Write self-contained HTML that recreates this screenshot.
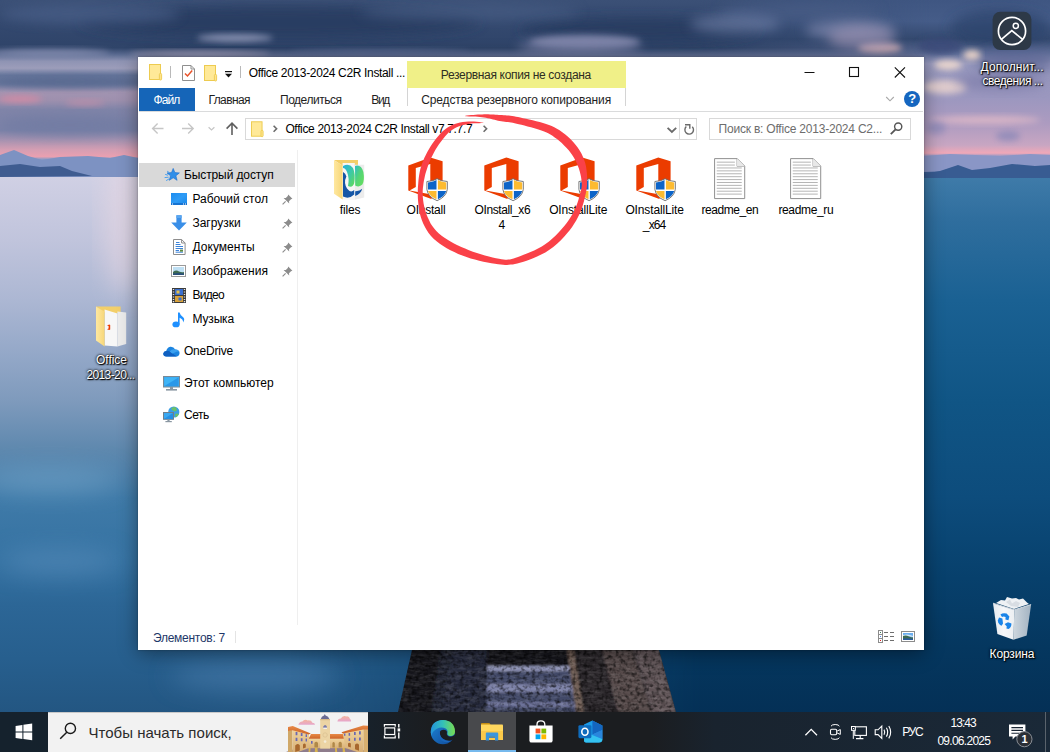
<!DOCTYPE html>
<html lang="ru"><head><meta charset="utf-8"><title>Desktop</title>
<style>
*{box-sizing:border-box;margin:0;padding:0}
html,body{width:1050px;height:752px;overflow:hidden;background:#1d4a70}
body{font-family:"Liberation Sans",sans-serif;font-size:12px;color:#000;position:relative}
.a{position:absolute}
#bg{position:absolute;left:0;top:0;width:1050px;height:752px;overflow:hidden}
#win{position:absolute;left:138px;top:57px;width:786px;height:593px;background:#fff;box-shadow:0 3px 18px rgba(0,0,0,.42),0 0 2px rgba(0,0,0,.3)}
.t{position:absolute;white-space:nowrap;line-height:16px;height:16px}
.dl{color:#fff;text-shadow:1px 1px 1px #000,0 0 3px rgba(0,0,0,.9),0 0 2px rgba(0,0,0,.8)}
#taskbar{position:absolute;left:0;top:712px;width:1050px;height:40px;background:#1a242e}
svg{position:absolute;overflow:visible}
</style></head><body>
<div id="bg">
<svg width="1050" height="752" viewBox="0 0 1050 752" style="position:absolute;left:0;top:0">
<defs>
<linearGradient id="wl" x1="0" y1="177" x2="0" y2="712" gradientUnits="userSpaceOnUse">
<stop offset="0" stop-color="#d0d0e4"/><stop offset=".12" stop-color="#c0c4dc"/><stop offset=".23" stop-color="#acb7d3"/>
<stop offset=".33" stop-color="#94a8c8"/><stop offset=".42" stop-color="#7e9abc"/><stop offset=".51" stop-color="#5e88ae"/>
<stop offset=".6" stop-color="#3f7aa8"/><stop offset=".72" stop-color="#3572a2"/><stop offset=".8" stop-color="#2c6696"/>
<stop offset=".9" stop-color="#275f8e"/><stop offset="1" stop-color="#235682"/>
</linearGradient>
<linearGradient id="wr" x1="0" y1="177" x2="0" y2="712" gradientUnits="userSpaceOnUse">
<stop offset="0" stop-color="#3f7ba9"/><stop offset=".08" stop-color="#2f6e9e"/><stop offset=".23" stop-color="#1a6193"/>
<stop offset=".42" stop-color="#105585"/><stop offset=".6" stop-color="#0d4c7c"/><stop offset=".75" stop-color="#07406c"/>
<stop offset=".88" stop-color="#05375f"/><stop offset="1" stop-color="#043056"/>
</linearGradient>
<linearGradient id="mk" x1="290" y1="0" x2="700" y2="0" gradientUnits="userSpaceOnUse">
<stop offset="0" stop-color="#000"/><stop offset="1" stop-color="#fff"/>
</linearGradient>
<mask id="mr"><rect x="0" y="0" width="1050" height="752" fill="url(#mk)"/></mask>
<linearGradient id="sky" x1="0" y1="0" x2="0" y2="177" gradientUnits="userSpaceOnUse">
<stop offset="0" stop-color="#3b5076"/><stop offset=".12" stop-color="#34496f"/><stop offset=".27" stop-color="#2f4469"/><stop offset=".31" stop-color="#5c6c92"/>
<stop offset=".345" stop-color="#8e93b3"/><stop offset=".385" stop-color="#9c9dba"/><stop offset=".425" stop-color="#66769c"/><stop offset=".475" stop-color="#6f7ca2"/>
<stop offset=".52" stop-color="#a294b1"/><stop offset=".565" stop-color="#9e90ae"/><stop offset=".62" stop-color="#8084a8"/><stop offset=".735" stop-color="#7b82a8"/>
<stop offset=".79" stop-color="#a592b0"/><stop offset=".845" stop-color="#d49eb3"/><stop offset=".885" stop-color="#eaa0b0"/><stop offset=".9" stop-color="#8a9ac4"/><stop offset="1" stop-color="#7f92c0"/>
</linearGradient>
<linearGradient id="skyr" x1="0" y1="0" x2="0" y2="177" gradientUnits="userSpaceOnUse">
<stop offset="0" stop-color="#3f5682"/><stop offset=".12" stop-color="#455c88"/><stop offset=".22" stop-color="#34496f"/><stop offset=".3" stop-color="#5f6e98"/>
<stop offset=".36" stop-color="#9698bd"/><stop offset=".55" stop-color="#9b97bf"/><stop offset=".7" stop-color="#ad9bc0"/><stop offset=".82" stop-color="#c8a6c2"/>
<stop offset=".865" stop-color="#f0a8b8"/><stop offset=".885" stop-color="#8d97c6"/><stop offset=".93" stop-color="#8a94c4"/><stop offset=".94" stop-color="#3d6197"/><stop offset="1" stop-color="#3a5e94"/>
</linearGradient>
<linearGradient id="mk2" x1="700" y1="0" x2="930" y2="0" gradientUnits="userSpaceOnUse">
<stop offset="0" stop-color="#000"/><stop offset="1" stop-color="#fff"/>
</linearGradient>
<mask id="mr2"><rect x="0" y="0" width="1050" height="752" fill="url(#mk2)"/></mask>
<filter id="b3" x="-20%" y="-50%" width="140%" height="200%"><feGaussianBlur stdDeviation="3"/></filter>
<filter id="b6" x="-20%" y="-50%" width="140%" height="200%"><feGaussianBlur stdDeviation="6"/></filter>
<filter id="b12" x="-30%" y="-80%" width="160%" height="260%"><feGaussianBlur stdDeviation="12"/></filter>
<filter id="b1" x="-10%" y="-10%" width="120%" height="120%"><feGaussianBlur stdDeviation="0.8"/></filter>
</defs>
<!-- water -->
<rect x="0" y="177" width="1050" height="575" fill="url(#wl)"/>
<rect x="0" y="177" width="1050" height="575" fill="url(#wr)" mask="url(#mr)"/>
<!-- pinkish glow on left water -->
<ellipse cx="124" cy="225" rx="20" ry="70" fill="#ecd9e3" opacity=".55" filter="url(#b12)"/>
<!-- light streaks in lower-left water -->
<ellipse cx="50" cy="480" rx="70" ry="13" fill="#74a8ce" opacity=".55" filter="url(#b12)"/>
<ellipse cx="60" cy="562" rx="60" ry="13" fill="#5e92c0" opacity=".5" filter="url(#b12)"/>
<ellipse cx="255" cy="676" rx="85" ry="16" fill="#4d7fae" opacity=".55" filter="url(#b12)"/>
<!-- sky -->
<rect x="0" y="0" width="1050" height="177" fill="url(#sky)"/>
<rect x="0" y="0" width="1050" height="177" fill="url(#skyr)" mask="url(#mr2)"/>
<!-- top dark clouds -->
<ellipse cx="280" cy="22" rx="200" ry="16" fill="#263a5e" opacity=".8" filter="url(#b6)"/>
<ellipse cx="640" cy="30" rx="120" ry="12" fill="#273b5f" opacity=".8" filter="url(#b6)"/>
<ellipse cx="90" cy="14" rx="90" ry="10" fill="#4a5f88" opacity=".7" filter="url(#b6)"/>
<ellipse cx="470" cy="12" rx="110" ry="9" fill="#4a5e86" opacity=".6" filter="url(#b6)"/>
<ellipse cx="800" cy="12" rx="80" ry="10" fill="#4b5f88" opacity=".6" filter="url(#b6)"/>
<ellipse cx="235" cy="38" rx="38" ry="4" fill="#9098b8" opacity=".9" filter="url(#b3)"/>
<ellipse cx="585" cy="42" rx="55" ry="6" fill="#8a8fb2" opacity=".9" filter="url(#b3)"/>
<ellipse cx="50" cy="53" rx="60" ry="4" fill="#8890b2" opacity=".8" filter="url(#b3)"/>
<ellipse cx="850" cy="30" rx="45" ry="9" fill="#7a84aa" opacity=".8" filter="url(#b6)"/>
<ellipse cx="880" cy="48" rx="22" ry="5" fill="#e0b8bc" opacity=".85" filter="url(#b3)"/>
<ellipse cx="1000" cy="28" rx="50" ry="18" fill="#2b426a" opacity=".7" filter="url(#b6)"/>
<ellipse cx="580" cy="47" rx="62" ry="9" fill="#7c82a8" opacity=".75" filter="url(#b6)"/>
<ellipse cx="735" cy="24" rx="45" ry="9" fill="#7484ac" opacity=".6" filter="url(#b6)"/>
<ellipse cx="862" cy="38" rx="34" ry="12" fill="#a094b4" opacity=".6" filter="url(#b6)"/>
<ellipse cx="200" cy="54" rx="70" ry="3" fill="#a8a2bc" opacity=".85" filter="url(#b3)"/>
<ellipse cx="380" cy="52" rx="90" ry="3" fill="#5c6c94" opacity=".7" filter="url(#b3)"/>
<!-- left sky details -->
<ellipse cx="70" cy="82" rx="80" ry="6" fill="#56678e" opacity=".8" filter="url(#b3)"/>
<ellipse cx="20" cy="99" rx="22" ry="3.5" fill="#e08aa2" opacity=".8" filter="url(#b3)"/>
<ellipse cx="85" cy="103" rx="20" ry="3" fill="#cf90a8" opacity=".6" filter="url(#b3)"/>
<ellipse cx="70" cy="125" rx="70" ry="10" fill="#6f7aa2" opacity=".7" filter="url(#b6)"/>
<!-- left mountains -->
<path d="M0,155 L14,150 L28,156 L42,160 L60,157 L88,156 L110,158 L124,155 L138,158 L138,177 L0,177Z" fill="#7d92c2"/>
<path d="M0,166 L20,164 L40,167 L60,166 L72,171 L92,176 L0,177Z" fill="#3f5c90"/>
<!-- right sky details -->
<ellipse cx="940" cy="46" rx="22" ry="8" fill="#3a4a78" opacity=".8" filter="url(#b3)"/>
<ellipse cx="1015" cy="62" rx="40" ry="12" fill="#5a6492" opacity=".7" filter="url(#b6)"/>
<ellipse cx="972" cy="55" rx="9" ry="5" fill="#f6dccc" opacity=".9" filter="url(#b3)"/>
<ellipse cx="948" cy="65" rx="14" ry="5" fill="#f8e0d0" opacity=".85" filter="url(#b3)"/>
<ellipse cx="945" cy="87" rx="22" ry="7" fill="#f0d8d0" opacity=".8" filter="url(#b3)"/>
<ellipse cx="1000" cy="82" rx="45" ry="8" fill="#7c7aa8" opacity=".7" filter="url(#b6)"/>
<ellipse cx="985" cy="120" rx="55" ry="4" fill="#e4bcc8" opacity=".8" filter="url(#b3)"/>
<ellipse cx="1008" cy="136" rx="12" ry="5" fill="#8a88b8" opacity=".8" filter="url(#b3)"/>
<ellipse cx="936" cy="128" rx="10" ry="6" fill="#8a88b8" opacity=".7" filter="url(#b3)"/>
<!-- right mountains -->
<path d="M924,156 L950,154 L975,155 L1000,156 L1030,154 L1050,155 L1050,168 L924,172Z" fill="#8a96c6"/>
<path d="M924,174 L940,171 L958,165 L972,170 L990,168 L1012,164 L1035,166 L1050,165 L1050,178 L924,178Z" fill="#385c92"/>
<!-- pier -->
<defs>
<clipPath id="pc"><path d="M412,650 L659,650 L676,712 L398,712Z"/></clipPath>
<filter id="nz" x="0" y="0" width="100%" height="100%"><feTurbulence type="fractalNoise" baseFrequency="0.09 0.35" numOctaves="3" seed="7"/><feColorMatrix type="matrix" values="0 0 0 0 1  0 0 0 0 1  0 0 0 0 1  1.6 0 0 0 -0.55"/></filter>
<filter id="nz2" x="0" y="0" width="100%" height="100%"><feTurbulence type="fractalNoise" baseFrequency="0.25 0.25" numOctaves="2" seed="3"/><feColorMatrix type="matrix" values="0 0 0 0 0  0 0 0 0 0  0 0 0 0 0  0 2.2 0 0 -0.95"/></filter>
</defs>
<g clip-path="url(#pc)">
<g filter="url(#b1)">
<path d="M405,648 L665,648 L682,714 L392,714Z" fill="#15181f"/>
<path d="M441,650 L452,650 L447,712 L432,712Z" fill="#222836"/>
<path d="M453,650 L487,650 L486,712 L440,712Z" fill="#262c3c"/>
<path d="M487,666 L572,666 L577,712 L486,712Z" fill="#434968"/>
<path d="M487,666 L572,666 L573,671 L487,671Z" fill="#9094b8"/>
<path d="M487,684 L574,684 L575,692 L487,692Z" fill="#7a7fa6"/>
<path d="M487,702 L576,702 L577,707 L487,707Z" fill="#696e96"/>
<path d="M487,650 L567,650 L571,665 L487,665Z" fill="#18171d"/>
<path d="M567,650 L574,650 L584,712 L576,712Z" fill="#6e5c52"/>
<path d="M575,650 L602,650 L620,712 L585,712Z" fill="#2b2529"/>
<path d="M602,650 L633,650 L652,712 L618,712Z" fill="#54484a"/>
<path d="M634,650 L659,650 L676,712 L652,712Z" fill="#5e5256"/>
</g>
<rect x="398" y="650" width="280" height="62" filter="url(#nz)" opacity=".16"/>
<rect x="398" y="650" width="280" height="62" filter="url(#nz2)" opacity=".7"/>
</g>
</svg>

</div>
<svg style="left:992px;top:11px" width="40" height="40" viewBox="992 11 40 40"><rect x="992.6" y="11.8" width="38.8" height="38.2" rx="7.5" fill="#2d3947"/><circle cx="1012" cy="31" r="13.6" fill="none" stroke="#fff" stroke-width="1.7"/><circle cx="1015.8" cy="25.8" r="2.6" fill="none" stroke="#fff" stroke-width="1.5"/><path d="M1001.4,39.4 L1011.8,30.6 L1022.6,39.4" fill="none" stroke="#fff" stroke-width="1.7"/></svg>
<div class="t dl" style="left:980.6px;top:58.6px;font-size:12px;color:#fff;letter-spacing:0.066px;">Дополнит...</div>
<div class="t dl" style="left:982.4px;top:73.4px;font-size:12px;color:#fff;letter-spacing:-0.445px;">сведения ...</div>
<svg style="left:991px;top:595px" width="42" height="46" viewBox="991 595 42 46"><defs><linearGradient id="rb" x1="0" y1="0" x2="1" y2="0"><stop offset="0" stop-color="#e6eaee"/><stop offset=".5" stop-color="#f6f7f9"/><stop offset="1" stop-color="#eceff2"/></linearGradient><linearGradient id="rb2" x1="0" y1="0" x2="1" y2="0"><stop offset="0" stop-color="#e4e8ec"/><stop offset="1" stop-color="#b4c0cc"/></linearGradient></defs><path d="M996,603 L1001,600 L1005,600.6 L1007,597 L1012,598.6 L1016,598 L1019,599.4 L1023,598.6 L1027,602.4 L1029,604 L1014,609Z" fill="#eef1f4"/><path d="M1006,602 L1010,599.6 L1012,603.6 L1016,601 L1020,603 L1018,607 L1011,606Z" fill="#d8dde3"/><path d="M993,603.2 L1014.3,609.8 L1013.5,639.7 L997.4,633.9Z" fill="url(#rb)"/><path d="M1014.3,609.8 L1031.1,604.6 L1026.7,635.4 L1013.5,639.7Z" fill="url(#rb2)" opacity=".9"/><path d="M993,603.2 L1014.3,609.8 L1031.1,604.6" fill="none" stroke="#cfd6de" stroke-width="1"/><path d="M1000.4,614.6 Q1003,612.4 1006.6,613.6 L1009.4,616.4 L1008.4,620.2 L1005.4,619.6 L1005.6,617 Q1003.6,616 1002,617Z" fill="#1a84e8"/><path d="M999,617.4 L1002.4,618.6 L1003,623.6 L1001.6,625.8 Q998.2,624 997.8,620.4Z" fill="#1a84e8"/><path d="M1004.6,624 L1008,622.2 L1011.4,623.4 Q1011.6,627.2 1008.6,629 L1006.4,628.4 L1006.8,626.4Z" fill="#1a84e8"/></svg>
<div class="t dl" style="left:989.6px;top:646.4px;font-size:12px;color:#fff;letter-spacing:-0.153px;">Корзина</div>
<svg style="left:95px;top:305px" width="33" height="43" viewBox="95 305 33 43"><defs><linearGradient id="fl2" x1="0" y1="0" x2="1" y2="0"><stop offset="0" stop-color="#ffe8a0"/><stop offset="1" stop-color="#f6d678"/></linearGradient></defs><path d="M96,306.4 H120.6 V313 H105Z" fill="#f3cf6a"/><path d="M104.6,309.6 L117.4,313.6 V346.4 L104.6,345.6Z" fill="#f7f7f7"/><path d="M117.4,311.6 L126.2,312.4 V344 L117.4,346.4Z" fill="#ececec"/><path d="M107,325.4 l2.2,-0.8 l1,0.4 v4.6 l-1,0.4 l-2.2,-0.8 l1.6,-0.6 v-2.6z" fill="#eb3c00"/><path d="M96,306.6 L104.6,311.8 V346.6 L96,340.4Z" fill="url(#fl2)"/></svg>
<div class="t dl" style="left:96.0px;top:351.6px;font-size:12px;color:#fff;letter-spacing:-0.025px;">Office</div>
<div class="t dl" style="left:86.4px;top:367.4px;font-size:12px;color:#fff;letter-spacing:-0.605px;">2013-20...</div>
<div id="win"></div>
<svg style="left:149px;top:64px" width="13" height="16" viewBox="0 0 13 16"><rect x="0.5" y="0.5" width="11" height="15" fill="#ffe998" stroke="#edcb50"/><rect x="10.4" y="9.4" width="2.2" height="6.6" rx="1" fill="#ffe48c" stroke="#edcb50" stroke-width=".9"/></svg>
<div class="a" style="left:170px;top:66px;width:1px;height:12px;background:#b9b9b9"></div>
<svg style="left:182px;top:65px" width="13" height="16" viewBox="0 0 13 16"><path d="M0.5,0.5 H9 L12.5,4 V15.5 H0.5Z" fill="#fff" stroke="#8f8f8f"/><path d="M9,0.5 V4 H12.5" fill="none" stroke="#8f8f8f"/><path d="M3,8.5 L5.5,11 L10.2,5.6" fill="none" stroke="#e8532a" stroke-width="1.5"/></svg>
<svg style="left:204px;top:65px" width="13" height="16" viewBox="0 0 13 16"><rect x="0.5" y="0.5" width="11" height="15" fill="#ffe998" stroke="#edcb50"/><rect x="10.4" y="9.4" width="2.2" height="6.6" rx="1" fill="#ffe48c" stroke="#edcb50" stroke-width=".9"/></svg>
<svg style="left:224px;top:70px" width="9" height="8" viewBox="0 0 9 8"><rect x="1" y="1" width="7" height="1.2" fill="#111"/><path d="M1,3.8 H8 L4.5,7.4Z" fill="#111"/></svg>
<div class="a" style="left:240px;top:66px;width:1px;height:12px;background:#b9b9b9"></div>
<div class="t" style="left:248.8px;top:64.8px;font-size:12px;color:#000;letter-spacing:-0.345px;">Office 2013-2024 C2R Install ...</div>
<div class="a" style="left:407px;top:61px;width:219px;height:27px;background:#f0f088"></div>
<div class="t" style="left:440.8px;top:66.8px;font-size:12px;color:#2e2e22;letter-spacing:-0.333px;">Резервная копия не создана</div>
<svg style="left:800px;top:60px" width="120" height="24" viewBox="800 60 120 24"><path d="M804.5,72.5 H814.5" stroke="#111" stroke-width="1"/><rect x="849.5" y="67.5" width="9" height="9" fill="none" stroke="#111" stroke-width="1.1"/><path d="M894.8,67.3 L905,77.5 M905,67.3 L894.8,77.5" stroke="#111" stroke-width="1.1"/></svg>
<div class="a" style="left:139px;top:88px;width:56px;height:23px;background:#1565b8"></div>
<div class="t" style="left:153.4px;top:91.8px;font-size:12px;color:#fff;letter-spacing:-0.872px;">Файл</div>
<div class="t" style="left:208.4px;top:91.8px;font-size:12px;color:#1e1e1e;letter-spacing:-0.581px;">Главная</div>
<div class="t" style="left:280.0px;top:91.8px;font-size:12px;color:#1e1e1e;letter-spacing:-0.474px;">Поделиться</div>
<div class="t" style="left:371.2px;top:91.8px;font-size:12px;color:#1e1e1e;letter-spacing:-1.309px;">Вид</div>
<div class="a" style="left:407px;top:88px;width:1px;height:18px;background:#d4d4d4"></div>
<div class="a" style="left:625px;top:88px;width:1px;height:18px;background:#d4d4d4"></div>
<div class="t" style="left:421.2px;top:91.8px;font-size:12px;color:#1e1e1e;letter-spacing:-0.115px;">Средства резервного копирования</div>
<div class="a" style="left:139px;top:111px;width:784px;height:1px;background:#dadbdc"></div>
<svg style="left:884px;top:90px" width="38" height="18" viewBox="884 90 38 18"><path d="M886.2,97 L890,100.8 L893.8,97" fill="none" stroke="#a8a8a8" stroke-width="1.1"/><circle cx="912" cy="99" r="8" fill="#1566c0"/></svg>
<div class="t" style="left:908.2px;top:91.0px;font-size:13px;color:#fff;font-weight:700;">?</div>
<svg style="left:148px;top:118px" width="96" height="22" viewBox="148 118 96 22"><path d="M163.5,128.5 H152.8 M157.6,123.6 L152.6,128.5 L157.6,133.4" fill="none" stroke="#c6c6c6" stroke-width="1.4"/><path d="M182,128.5 H193 M188.2,123.6 L193.2,128.5 L188.2,133.4" fill="none" stroke="#c6c6c6" stroke-width="1.4"/><path d="M208.6,127.2 L211.5,130 L214.4,127.2" fill="none" stroke="#c6c6c6" stroke-width="1.2"/><path d="M232,135 V123.2 M226.6,128.6 L232,123.1 L237.4,128.6" fill="none" stroke="#5f5f5f" stroke-width="1.6"/></svg>
<div class="a" style="left:245px;top:118px;width:452px;height:22px;border:1px solid #d9d9d9;background:#fff"></div>
<div class="a" style="left:679px;top:119px;width:1px;height:20px;background:#dcdcdc"></div>
<svg style="left:250.5px;top:120.5px" width="12.5" height="16" viewBox="0 0 13 16"><rect x="0.5" y="0.5" width="11" height="15" fill="#ffe998" stroke="#edcb50"/><rect x="10.4" y="9.4" width="2.2" height="6.6" rx="1" fill="#ffe48c" stroke="#edcb50" stroke-width=".9"/></svg>
<svg style="left:270px;top:122px" width="220" height="14" viewBox="270 122 220 14"><path d="M273.6,125.8 L276.6,128.8 L273.6,131.8" fill="none" stroke="#6a6a6a" stroke-width="1.6"/><path d="M483.6,125.8 L486.6,128.8 L483.6,131.8" fill="none" stroke="#6a6a6a" stroke-width="1.6"/></svg>
<div class="t" style="left:285.4px;top:120.8px;font-size:12px;color:#000;letter-spacing:-0.353px;">Office 2013-2024 C2R Install v7.7.7.7</div>
<svg style="left:664px;top:120px" width="32" height="18" viewBox="664 120 32 18"><path d="M667.6,127.8 L671.9,132 L676.2,127.8" fill="none" stroke="#6a6a6a" stroke-width="1.8"/><path d="M686.3,126.6 A4.3,4.3 0 1 0 692.3,126.8" fill="none" stroke="#6a6a6a" stroke-width="1.4"/><path d="M685,124.8 H689.8 V128.8" fill="none" stroke="#6a6a6a" stroke-width="1.4"/></svg>
<div class="a" style="left:709px;top:118px;width:202px;height:22px;border:1px solid #d9d9d9;background:#fff"></div>
<div class="t" style="left:718.6px;top:120.8px;font-size:12px;color:#6d6d6d;letter-spacing:-0.212px;">Поиск в: Office 2013-2024 C2...</div>
<svg style="left:888px;top:121px" width="16" height="16" viewBox="888 121 16 16"><circle cx="898.2" cy="126.6" r="3.6" fill="none" stroke="#555" stroke-width="1.4"/><path d="M895.6,129.4 L890.8,134.2" stroke="#555" stroke-width="1.8"/></svg>
<div class="a" style="left:139px;top:163px;width:156px;height:24px;background:#d9d9d9"></div>
<div class="a" style="left:297px;top:150px;width:1px;height:475px;background:#efefef"></div>
<div class="t" style="left:184.0px;top:166.7px;font-size:12px;color:#000;letter-spacing:-0.111px;">Быстрый доступ</div>
<div class="t" style="left:192.4px;top:190.7px;font-size:12px;color:#000;letter-spacing:0.016px;">Рабочий стол</div>
<div class="t" style="left:192.4px;top:214.7px;font-size:12px;color:#000;letter-spacing:0.015px;">Загрузки</div>
<div class="t" style="left:192.4px;top:238.7px;font-size:12px;color:#000;letter-spacing:0.055px;">Документы</div>
<div class="t" style="left:192.4px;top:262.7px;font-size:12px;color:#000;letter-spacing:0.008px;">Изображения</div>
<div class="t" style="left:192.4px;top:286.7px;font-size:12px;color:#000;letter-spacing:-0.716px;">Видео</div>
<div class="t" style="left:192.4px;top:310.7px;font-size:12px;color:#000;letter-spacing:-0.131px;">Музыка</div>
<div class="t" style="left:184.0px;top:342.7px;font-size:12px;color:#000;letter-spacing:-0.213px;">OneDrive</div>
<div class="t" style="left:184.0px;top:374.7px;font-size:12px;color:#000;letter-spacing:-0.01px;">Этот компьютер</div>
<div class="t" style="left:184.0px;top:406.7px;font-size:12px;color:#000;letter-spacing:-0.501px;">Сеть</div>
<div class="t" style="left:153.0px;top:629.6px;font-size:12px;color:#1e3769;letter-spacing:-0.274px;">Элементов: 7</div>
<div class="a" style="left:235px;top:631px;width:1px;height:12px;background:#e4e4e4"></div>
<div class="t" style="left:339.8px;top:201.8px;font-size:12px;color:#000;letter-spacing:-0.136px;">files</div>
<div class="t" style="left:406.6px;top:201.8px;font-size:12px;color:#000;letter-spacing:-0.241px;">OInstall</div>
<div class="t" style="left:474.6px;top:201.8px;font-size:12px;color:#000;letter-spacing:-0.403px;">OInstall_x6</div>
<div class="t" style="left:549.2px;top:201.8px;font-size:12px;color:#000;letter-spacing:-0.166px;">OInstallLite</div>
<div class="t" style="left:625.4px;top:201.8px;font-size:12px;color:#000;letter-spacing:-0.13px;">OInstallLite</div>
<div class="t" style="left:701.6px;top:201.8px;font-size:12px;color:#000;letter-spacing:-0.465px;">readme_en</div>
<div class="t" style="left:778.4px;top:201.8px;font-size:12px;color:#000;letter-spacing:-0.354px;">readme_ru</div>
<div class="t" style="left:498.6px;top:216.8px;font-size:12px;color:#000;">4</div>
<div class="t" style="left:642.8px;top:216.8px;font-size:12px;color:#000;letter-spacing:-0.844px;">_x64</div>
<svg style="left:164px;top:168px" width="16" height="14" viewBox="0 0 16 14"><path d="M9.2,0.4 L10.9,4.6 L15.4,4.9 L11.9,7.8 L13.1,12.3 L9.2,9.8 L5.3,12.3 L6.5,7.8 L3,4.9 L7.5,4.6Z" fill="#2f8ee8" stroke="#1a6fd0" stroke-width=".6"/><path d="M1.2,6.4 L4,7.2 M0.6,9.6 L4.6,9.2 M2.2,12.6 L5.2,10.8 M3.2,3.2 L5,4.4" stroke="#4aa0ee" stroke-width="1"/></svg>
<svg style="left:171px;top:193px" width="16" height="12" viewBox="0 0 16 12"><defs><linearGradient id="dk" x1="0" y1="0" x2="1" y2="1"><stop offset="0" stop-color="#1c8cf0"/><stop offset=".5" stop-color="#2f9cf6"/><stop offset="1" stop-color="#1787ea"/></linearGradient></defs><rect x="0" y="0" width="16" height="12" fill="url(#dk)"/><rect x="0" y="10" width="16" height="2" fill="#1673d2"/><rect x="1" y="10.5" width="1" height="1" fill="#fff"/><rect x="12" y="10.5" width="1" height="1" fill="#fff"/><rect x="14" y="10.5" width="1" height="1" fill="#fff"/></svg>
<svg style="left:171px;top:215px" width="16" height="16" viewBox="0 0 16 16"><path d="M5.4,0.3 H10.6 V7.6 H15.8 L8,15.6 L0.2,7.6 H5.4Z" fill="#3a8fe8"/><path d="M5.4,0.3 H10.6 V3 H5.4Z" fill="#5aa6f0"/></svg>
<svg style="left:173px;top:239px" width="13" height="16" viewBox="0 0 13 16"><path d="M0.5,0.5 H8.6 L12.1,4 V15.5 H0.5Z" fill="#fff" stroke="#8d8d8d"/><path d="M8.6,0.5 V4 H12.1" fill="none" stroke="#8d8d8d"/><path d="M3,3.5 H6.5 M2.6,5.5 H7.5 M2.6,7.5 H10 M2.6,9.5 H10 M2.6,11.5 H6 M2.6,13.2 H10" stroke="#3b82d8" stroke-width="1"/><rect x="7" y="10.6" width="3" height="2" fill="#5a8a3c"/></svg>
<svg style="left:171px;top:265px" width="15" height="12" viewBox="0 0 15 12"><rect x="0.5" y="0.5" width="14" height="11" fill="#fff" stroke="#9a9a9a"/><rect x="2" y="2" width="11" height="8" fill="#bfe0f4"/><path d="M2,10 V7 Q5,4.5 8,6.4 Q10.5,7.6 13,7 V10Z" fill="#3d6a52"/><path d="M2,10 V8.6 Q7,7.6 13,8.6 V10Z" fill="#2a4f7a"/></svg>
<svg style="left:172px;top:287.5px" width="14" height="15" viewBox="0 0 14 15"><rect x="0" y="0" width="14" height="15" fill="#3b3b3b"/><rect x="3" y="1" width="8" height="6" fill="#3a6fd0"/><rect x="3" y="8" width="8" height="6" fill="#d9a23a"/><rect x="4.5" y="2.5" width="3" height="3" fill="#e6c04a"/><rect x="6.5" y="9.5" width="3" height="3" fill="#3a6fd0"/><path d="M0.8,1.5 H2.2 M0.8,4 H2.2 M0.8,6.5 H2.2 M0.8,9 H2.2 M0.8,11.5 H2.2 M0.8,13.6 H2.2 M11.8,1.5 H13.2 M11.8,4 H13.2 M11.8,6.5 H13.2 M11.8,9 H13.2 M11.8,11.5 H13.2 M11.8,13.6 H13.2" stroke="#e8e8e8" stroke-width="1.2"/></svg>
<svg style="left:172px;top:311.5px" width="13" height="16" viewBox="0 0 13 16"><ellipse cx="4" cy="12.4" rx="3.6" ry="2.9" fill="#1e90ff"/><path d="M6,12.6 V0.4 H7.6 Q8.2,3.4 11.4,5.6 Q13.2,7.6 11,10.6 Q11.6,7.6 7.6,5.8 V12.6Z" fill="#1e90ff"/></svg>
<svg style="left:163px;top:345.5px" width="17" height="11" viewBox="0 0 17 11"><path d="M3.4,10.6 Q0.2,10.4 0.3,7.6 Q0.6,5.2 3.2,5 Q4,1.6 7.2,0.8 Q10.6,0.4 12.2,3.4 Q15.2,3.2 16.4,5.8 Q17.2,9.6 13.8,10.6Z" fill="#1b84e0"/><path d="M3.4,10.6 Q0.2,10.4 0.3,7.6 Q0.6,5.2 3.2,5 Q5.2,4.4 6.8,5.6 L13.8,10.6Z" fill="#0f5fc0"/><path d="M6.8,5.6 Q8.6,2.8 12.2,3.4 Q15.2,3.2 16.4,5.8 Q14,5.2 12,6.4 L9.2,7.6Z" fill="#3aa0f0"/></svg>
<svg style="left:163px;top:375.5px" width="17" height="15" viewBox="0 0 17 15"><rect x="0.5" y="0.5" width="16" height="10.5" fill="#38a8f0" stroke="#7a8a96"/><rect x="1.5" y="1.5" width="14" height="8.5" fill="#3fb4f6"/><path d="M1.5,10 L15.5,1.5 V10Z" fill="#2a98e8"/><rect x="7" y="11" width="3" height="2" fill="#8a97a2"/><rect x="3" y="13" width="11" height="1.6" fill="#8a97a2"/></svg>
<svg style="left:163px;top:406px" width="17" height="17" viewBox="0 0 17 17"><circle cx="10.8" cy="6" r="5.6" fill="#3a9ee6"/><path d="M8,2.4 Q10,0.8 12.6,1 Q14.4,3 13.6,5 Q11,6 9.6,4.6Z M12,8 Q14.4,7.2 16,8 Q15,10.8 12.6,11.4Z" fill="#6cc06a"/><path d="M5.6,6 A5.6,5.6 0 0 0 10.8,11.6 L10.8,6Z" fill="#2a7fcf" opacity=".5"/><rect x="0.5" y="6.5" width="10" height="6.8" fill="#3aa8f2" stroke="#6f7f8c"/><path d="M1,13 L10,7 V13Z" fill="#2590e4"/><rect x="4.4" y="13.4" width="2.2" height="1.6" fill="#8a97a2"/><rect x="2.4" y="15" width="6.4" height="1.2" fill="#8a97a2"/></svg>
<svg style="left:281.5px;top:194px" width="11" height="11" viewBox="0 0 11 11"><path d="M6.2,0.6 L10.4,4.8 L9,5.2 L7,7.2 L7.2,9.4 L5.2,7.6 L1.6,4 L3.8,4 L5.8,2Z" fill="#8c8c8c"/><path d="M3.6,7.4 L0.6,10.4" stroke="#8c8c8c" stroke-width="1.2"/></svg>
<svg style="left:281.5px;top:218px" width="11" height="11" viewBox="0 0 11 11"><path d="M6.2,0.6 L10.4,4.8 L9,5.2 L7,7.2 L7.2,9.4 L5.2,7.6 L1.6,4 L3.8,4 L5.8,2Z" fill="#8c8c8c"/><path d="M3.6,7.4 L0.6,10.4" stroke="#8c8c8c" stroke-width="1.2"/></svg>
<svg style="left:281.5px;top:242px" width="11" height="11" viewBox="0 0 11 11"><path d="M6.2,0.6 L10.4,4.8 L9,5.2 L7,7.2 L7.2,9.4 L5.2,7.6 L1.6,4 L3.8,4 L5.8,2Z" fill="#8c8c8c"/><path d="M3.6,7.4 L0.6,10.4" stroke="#8c8c8c" stroke-width="1.2"/></svg>
<svg style="left:281.5px;top:266px" width="11" height="11" viewBox="0 0 11 11"><path d="M6.2,0.6 L10.4,4.8 L9,5.2 L7,7.2 L7.2,9.4 L5.2,7.6 L1.6,4 L3.8,4 L5.8,2Z" fill="#8c8c8c"/><path d="M3.6,7.4 L0.6,10.4" stroke="#8c8c8c" stroke-width="1.2"/></svg>
<svg style="left:333px;top:159px" width="33" height="43" viewBox="333 159 33 43"><defs><linearGradient id="fl" x1="0" y1="0" x2="1" y2="0"><stop offset="0" stop-color="#ffe8a0"/><stop offset="1" stop-color="#f6d678"/></linearGradient><linearGradient id="eg" x1="0" y1="0" x2="1" y2="1"><stop offset="0" stop-color="#25b0e0"/><stop offset=".5" stop-color="#3cc8a8"/><stop offset="1" stop-color="#62dc54"/></linearGradient><linearGradient id="eg2" x1="0" y1="0" x2="1" y2="1"><stop offset="0" stop-color="#2fbcc8"/><stop offset=".45" stop-color="#52d478"/><stop offset="1" stop-color="#6ae05a"/></linearGradient></defs><path d="M334,160 H358 V166 H343Z" fill="#f3cf6a"/><path d="M342.6,163 H354.8 V200 L342.6,199.4Z" fill="#f6f6f6"/><path d="M354.8,164.8 H364.2 V197.6 L354.8,199.8Z" fill="#ececec"/><path d="M343,166 Q349,162.5 353,168 Q355.6,174 354.2,183 Q352.5,188.5 348,186 Q349.6,178 347,172 Q345.4,168 343,168Z" fill="url(#eg)"/><path d="M343,172 Q345.6,173 346.4,176.6 Q343.4,182.6 347,188.6 Q350.6,193.4 354.2,190 L354.2,194.6 Q349,199.6 343,196.6Z" fill="#1556a6"/><path d="M355,166 Q361,164 363.4,172 Q364.8,180 362.4,184.6 Q359,187.8 355.2,185.4Z" fill="url(#eg2)"/><path d="M355.2,191.2 Q359.6,191.4 362.2,188.8 Q361,194 355.2,196Z" fill="#1556a6"/><path d="M334,160.2 L342.6,165.4 V199.6 L334,193.8Z" fill="url(#fl)"/></svg>
<svg style="left:408px;top:157px" width="42" height="45" viewBox="0 0 42 45"><path fill-rule="evenodd" fill="#eb3c00" d="M0.3,8.6 L22.3,0.4 L34.6,4.2 V39.2 L22.7,41.8 L0.3,33.6Z M7.8,10.9 L22.3,7.1 V37.2 L1.6,33.5 L7.8,29.9Z"/><g transform="translate(18.4,21.4)"><path d="M10.7,0.3 Q13.6,2.6 20.9,3.1 V11 Q20,18.4 10.7,22.3 Q1.4,18.4 0.5,11 V3.1 Q7.8,2.6 10.7,0.3Z" fill="#fff" stroke="#6b6b6b" stroke-width="0.9"/><path d="M10.1,1.6 Q7.4,3.5 1.6,4 V11.2 H10.1Z" fill="#0c64c8"/><path d="M11.5,1.6 Q14.2,3.5 19.8,4 V11.2 H11.5Z" fill="#fdbb30"/><path d="M1.6,12.6 H10.1 V20.9 Q2.8,17.6 1.6,12.6Z" fill="#fdbb30"/><path d="M11.5,12.6 H19.8 Q18.6,17.6 11.5,20.9Z" fill="#0c64c8"/></g></svg>
<svg style="left:484px;top:157px" width="42" height="45" viewBox="0 0 42 45"><path fill-rule="evenodd" fill="#eb3c00" d="M0.3,8.6 L22.3,0.4 L34.6,4.2 V39.2 L22.7,41.8 L0.3,33.6Z M7.8,10.9 L22.3,7.1 V37.2 L1.6,33.5 L7.8,29.9Z"/><g transform="translate(18.4,21.4)"><path d="M10.7,0.3 Q13.6,2.6 20.9,3.1 V11 Q20,18.4 10.7,22.3 Q1.4,18.4 0.5,11 V3.1 Q7.8,2.6 10.7,0.3Z" fill="#fff" stroke="#6b6b6b" stroke-width="0.9"/><path d="M10.1,1.6 Q7.4,3.5 1.6,4 V11.2 H10.1Z" fill="#0c64c8"/><path d="M11.5,1.6 Q14.2,3.5 19.8,4 V11.2 H11.5Z" fill="#fdbb30"/><path d="M1.6,12.6 H10.1 V20.9 Q2.8,17.6 1.6,12.6Z" fill="#fdbb30"/><path d="M11.5,12.6 H19.8 Q18.6,17.6 11.5,20.9Z" fill="#0c64c8"/></g></svg>
<svg style="left:560px;top:157px" width="42" height="45" viewBox="0 0 42 45"><path fill-rule="evenodd" fill="#eb3c00" d="M0.3,8.6 L22.3,0.4 L34.6,4.2 V39.2 L22.7,41.8 L0.3,33.6Z M7.8,10.9 L22.3,7.1 V37.2 L1.6,33.5 L7.8,29.9Z"/><g transform="translate(18.4,21.4)"><path d="M10.7,0.3 Q13.6,2.6 20.9,3.1 V11 Q20,18.4 10.7,22.3 Q1.4,18.4 0.5,11 V3.1 Q7.8,2.6 10.7,0.3Z" fill="#fff" stroke="#6b6b6b" stroke-width="0.9"/><path d="M10.1,1.6 Q7.4,3.5 1.6,4 V11.2 H10.1Z" fill="#0c64c8"/><path d="M11.5,1.6 Q14.2,3.5 19.8,4 V11.2 H11.5Z" fill="#fdbb30"/><path d="M1.6,12.6 H10.1 V20.9 Q2.8,17.6 1.6,12.6Z" fill="#fdbb30"/><path d="M11.5,12.6 H19.8 Q18.6,17.6 11.5,20.9Z" fill="#0c64c8"/></g></svg>
<svg style="left:636px;top:157px" width="42" height="45" viewBox="0 0 42 45"><path fill-rule="evenodd" fill="#eb3c00" d="M0.3,8.6 L22.3,0.4 L34.6,4.2 V39.2 L22.7,41.8 L0.3,33.6Z M7.8,10.9 L22.3,7.1 V37.2 L1.6,33.5 L7.8,29.9Z"/><g transform="translate(18.4,21.4)"><path d="M10.7,0.3 Q13.6,2.6 20.9,3.1 V11 Q20,18.4 10.7,22.3 Q1.4,18.4 0.5,11 V3.1 Q7.8,2.6 10.7,0.3Z" fill="#fff" stroke="#6b6b6b" stroke-width="0.9"/><path d="M10.1,1.6 Q7.4,3.5 1.6,4 V11.2 H10.1Z" fill="#0c64c8"/><path d="M11.5,1.6 Q14.2,3.5 19.8,4 V11.2 H11.5Z" fill="#fdbb30"/><path d="M1.6,12.6 H10.1 V20.9 Q2.8,17.6 1.6,12.6Z" fill="#fdbb30"/><path d="M11.5,12.6 H19.8 Q18.6,17.6 11.5,20.9Z" fill="#0c64c8"/></g></svg>
<svg style="left:713.6px;top:157.6px" width="31.5" height="41.4" viewBox="0 0 32 42"><path d="M0.6,0.6 H23.6 L31.2,8.2 V41.2 H0.6Z" fill="#fff" stroke="#8e8e8e" stroke-width="1"/><path d="M2.8,4.20 H21.2" stroke="#b4b4b4" stroke-width="1"/><path d="M2.8,7.15 H21.2" stroke="#b4b4b4" stroke-width="1"/><path d="M2.8,10.10 H28.2" stroke="#b4b4b4" stroke-width="1"/><path d="M2.8,13.05 H28.2" stroke="#b4b4b4" stroke-width="1"/><path d="M2.8,16.00 H28.2" stroke="#b4b4b4" stroke-width="1"/><path d="M2.8,18.95 H28.2" stroke="#b4b4b4" stroke-width="1"/><path d="M2.8,21.90 H28.2" stroke="#b4b4b4" stroke-width="1"/><path d="M2.8,24.85 H28.2" stroke="#b4b4b4" stroke-width="1"/><path d="M2.8,27.80 H28.2" stroke="#b4b4b4" stroke-width="1"/><path d="M2.8,30.75 H28.2" stroke="#b4b4b4" stroke-width="1"/><path d="M2.8,33.70 H28.2" stroke="#b4b4b4" stroke-width="1"/><path d="M2.8,36.65 H28.2" stroke="#b4b4b4" stroke-width="1"/><path d="M23.4,0.8 V8.4 H31" fill="#e4e4e4" stroke="#a0a0a0" stroke-width="1"/><path d="M23.4,0.8 L31,8.4 H23.4Z" fill="#e8e8e8"/></svg>
<svg style="left:789.8px;top:157.6px" width="31.5" height="41.4" viewBox="0 0 32 42"><path d="M0.6,0.6 H23.6 L31.2,8.2 V41.2 H0.6Z" fill="#fff" stroke="#8e8e8e" stroke-width="1"/><path d="M2.8,4.20 H21.2" stroke="#b4b4b4" stroke-width="1"/><path d="M2.8,7.15 H21.2" stroke="#b4b4b4" stroke-width="1"/><path d="M2.8,10.10 H28.2" stroke="#b4b4b4" stroke-width="1"/><path d="M2.8,13.05 H28.2" stroke="#b4b4b4" stroke-width="1"/><path d="M2.8,16.00 H28.2" stroke="#b4b4b4" stroke-width="1"/><path d="M2.8,18.95 H28.2" stroke="#b4b4b4" stroke-width="1"/><path d="M2.8,21.90 H28.2" stroke="#b4b4b4" stroke-width="1"/><path d="M2.8,24.85 H28.2" stroke="#b4b4b4" stroke-width="1"/><path d="M2.8,27.80 H28.2" stroke="#b4b4b4" stroke-width="1"/><path d="M2.8,30.75 H28.2" stroke="#b4b4b4" stroke-width="1"/><path d="M2.8,33.70 H28.2" stroke="#b4b4b4" stroke-width="1"/><path d="M2.8,36.65 H28.2" stroke="#b4b4b4" stroke-width="1"/><path d="M23.4,0.8 V8.4 H31" fill="#e4e4e4" stroke="#a0a0a0" stroke-width="1"/><path d="M23.4,0.8 L31,8.4 H23.4Z" fill="#e8e8e8"/></svg>
<svg style="left:877px;top:629px" width="40" height="15" viewBox="877 629 40 15"><rect x="878.5" y="630.5" width="4" height="12" fill="#fff" stroke="#8c8c8c" stroke-width="1"/><path d="M878.5,634.5 h4 M878.5,638.5 h4" stroke="#8c8c8c" stroke-width="1"/><rect x="880" y="632" width="1" height="1" fill="#3a7a5a"/><rect x="880" y="636" width="1" height="1" fill="#4a8af0"/><rect x="880" y="640" width="1" height="1" fill="#e02020"/><path d="M884,632.5 H888 M890,632.5 H894 M884,636.5 H888 M890,636.5 H894 M884,640.5 H888 M890,640.5 H894" stroke="#6e6e6e" stroke-width="1"/><rect x="901.5" y="631.5" width="13" height="10" fill="#fff" stroke="#8c8c8c"/><rect x="903" y="633" width="10" height="7" fill="#6aaef0"/><path d="M903,635 Q908,633.6 913,636 V637 Q907,635.6 903,637Z" fill="#d8e8f4"/><path d="M903,640 V636 Q906,634.6 909,636.6 Q911,637.6 913,637.6 V640Z" fill="#3d6a52"/><path d="M903,640 V638.6 Q908,637.8 913,638.8 V640Z" fill="#2a5a9a"/></svg>
<svg style="left:0;top:0;pointer-events:none" width="1050" height="752" viewBox="0 0 1050 752"><path d="M465.3,116.3 L466.7,116.3 L469.0,116.4 L471.1,116.4 L473.4,116.5 L475.6,116.6 L477.8,116.8 L479.9,117.0 L482.0,117.2 L484.0,117.5 L485.9,117.8 L487.8,118.2 L489.6,118.6 L491.3,119.0 L493.0,119.4 L494.6,119.8 L496.3,120.3 L498.0,120.7 L499.6,121.0 L501.3,121.3 L503.0,121.5 L504.7,121.7 L506.3,121.9 L507.9,122.1 L509.5,122.3 L511.1,122.5 L512.8,122.8 L514.6,123.2 L516.6,123.7 L518.8,124.2 L521.4,124.8 L524.4,125.6 L527.6,126.4 L531.0,127.3 L534.4,128.2 L537.7,129.2 L540.7,130.2 L543.5,131.2 L546.0,132.3 L548.2,133.3 L550.4,134.5 L552.5,135.8 L554.7,137.4 L557.0,139.1 L559.4,141.0 L561.8,143.1 L564.1,145.4 L566.4,147.7 L568.5,150.1 L570.4,152.5 L572.2,155.0 L573.8,157.6 L575.3,160.2 L576.6,162.8 L577.7,165.5 L578.8,168.3 L579.7,171.2 L580.4,174.0 L581.0,176.8 L581.4,179.4 L581.7,181.7 L581.8,183.7 L581.8,185.4 L581.6,186.9 L581.4,188.5 L581.0,190.2 L580.5,192.2 L579.9,194.5 L579.2,197.1 L578.4,199.9 L577.5,202.8 L576.4,205.7 L575.2,208.6 L573.9,211.5 L572.4,214.3 L570.7,217.1 L568.8,220.0 L566.7,222.9 L564.3,226.0 L561.7,229.1 L558.8,232.3 L555.7,235.5 L552.4,238.6 L549.0,241.4 L545.5,244.1 L541.8,246.4 L538.0,248.5 L534.2,250.4 L530.5,252.0 L526.9,253.5 L523.6,254.8 L520.6,256.0 L518.0,257.0 L515.7,257.8 L513.6,258.4 L511.7,259.0 L509.9,259.4 L508.3,259.6 L506.8,259.7 L505.3,259.7 L503.6,259.6 L501.5,259.3 L499.0,258.8 L496.0,258.2 L492.6,257.4 L488.9,256.5 L484.9,255.5 L480.9,254.3 L476.9,253.1 L472.9,251.7 L469.0,250.2 L465.1,248.6 L461.3,247.0 L457.5,245.2 L454.0,243.4 L450.5,241.5 L447.2,239.6 L444.1,237.6 L441.3,235.5 L438.6,233.3 L436.3,231.0 L434.2,228.6 L432.3,226.1 L430.6,223.4 L429.2,220.6 L427.9,217.8 L426.7,214.9 L425.7,212.1 L424.9,209.2 L424.2,206.4 L423.6,203.5 L423.2,200.8 L422.9,198.1 L422.7,195.5 L422.7,193.0 L422.7,190.5 L422.9,188.1 L423.2,185.7 L423.5,183.3 L423.9,180.8 L424.4,178.4 L424.9,175.9 L425.5,173.5 L426.3,171.0 L427.1,168.4 L428.0,165.8 L429.0,163.1 L430.2,160.3 L431.4,157.6 L432.7,154.9 L434.1,152.2 L435.6,149.6 L437.2,147.0 L438.8,144.6 L440.5,142.2 L442.2,139.9 L443.8,137.9 L445.4,135.9 L447.0,134.2 L448.6,132.6 L450.2,131.2 L452.0,129.9 L453.9,128.7 L456.1,127.6 L458.4,126.6 L460.8,125.7 L463.4,125.0 L466.0,124.4 L468.7,123.9 L471.3,123.6 L474.0,123.3 L476.6,123.2 L479.1,123.2 L481.8,123.1 L483.4,123.1 L483.4,122.7 L481.8,122.4 L479.1,122.1 L476.6,121.8 L474.0,121.6 L471.2,121.5 L468.4,121.6 L465.6,121.8 L462.8,122.1 L460.0,122.6 L457.3,123.3 L454.7,124.1 L452.2,125.1 L449.8,126.2 L447.6,127.5 L445.5,128.9 L443.6,130.6 L441.6,132.3 L439.8,134.3 L437.9,136.4 L436.0,138.7 L434.1,141.2 L432.3,143.8 L430.5,146.5 L428.9,149.2 L427.3,152.0 L425.8,154.9 L424.4,157.8 L423.2,160.7 L422.1,163.6 L421.1,166.5 L420.3,169.3 L419.7,172.1 L419.2,174.8 L418.8,177.5 L418.5,180.1 L418.3,182.6 L418.1,185.2 L417.9,187.8 L417.8,190.3 L417.8,192.9 L417.8,195.6 L417.9,198.4 L418.1,201.3 L418.4,204.3 L418.7,207.3 L419.2,210.5 L419.9,213.7 L420.8,216.9 L421.9,220.2 L423.2,223.4 L424.7,226.6 L426.5,229.8 L428.6,232.9 L431.0,235.9 L433.6,238.7 L436.6,241.3 L439.8,243.8 L443.2,246.1 L446.7,248.2 L450.4,250.2 L454.3,252.1 L458.2,253.9 L462.3,255.5 L466.5,257.0 L470.7,258.4 L474.9,259.6 L479.2,260.7 L483.4,261.7 L487.5,262.5 L491.4,263.2 L495.0,263.8 L498.1,264.2 L500.8,264.6 L503.0,264.8 L505.1,264.9 L507.0,264.9 L508.8,264.8 L510.7,264.6 L512.8,264.4 L514.9,264.0 L517.3,263.5 L519.9,262.8 L522.7,262.0 L525.9,261.0 L529.3,259.8 L533.1,258.3 L537.1,256.6 L541.2,254.6 L545.3,252.4 L549.4,249.8 L553.3,246.9 L557.1,243.7 L560.6,240.4 L563.9,237.0 L566.9,233.6 L569.7,230.2 L572.1,226.9 L574.3,223.6 L576.2,220.4 L577.9,217.3 L579.5,214.1 L580.8,210.9 L582.0,207.7 L583.0,204.5 L583.9,201.5 L584.6,198.5 L585.2,195.8 L585.8,193.4 L586.2,191.3 L586.5,189.4 L586.8,187.6 L587.0,185.8 L587.1,183.8 L587.1,181.5 L587.1,179.0 L587.1,176.1 L586.9,173.0 L586.5,169.8 L586.0,166.4 L585.2,163.1 L584.1,159.7 L582.8,156.5 L581.3,153.3 L579.5,150.3 L577.5,147.3 L575.3,144.4 L573.0,141.7 L570.4,139.0 L567.7,136.6 L565.0,134.3 L562.3,132.2 L559.6,130.3 L556.9,128.7 L554.3,127.2 L551.7,126.0 L549.0,124.9 L546.1,123.9 L543.0,123.0 L539.7,122.0 L536.3,121.2 L532.7,120.3 L529.2,119.5 L526.0,118.8 L523.0,118.2 L520.3,117.6 L518.0,117.1 L516.0,116.7 L514.0,116.3 L512.2,116.0 L510.4,115.7 L508.7,115.5 L506.9,115.4 L505.2,115.3 L503.6,115.2 L502.0,115.1 L500.4,115.0 L498.8,114.9 L497.2,114.8 L495.5,114.7 L493.8,114.5 L492.0,114.4 L490.1,114.4 L488.2,114.3 L486.2,114.3 L484.2,114.3 L482.1,114.4 L480.0,114.5 L477.8,114.6 L475.6,114.7 L473.3,114.9 L471.1,115.1 L469.0,115.3 L466.7,115.6 L465.3,115.7Z" fill="#fa4148"/></svg>
<div id="taskbar"></div>
<div class="a" style="left:0;top:712px;width:1050px;height:40px;background:linear-gradient(90deg,#15222d 0,#17222c 34%,#1b1d20 41%,#1b1d20 62%,#19232e 68%,#1a2938 100%)"></div>
<svg style="left:15px;top:723px" width="18" height="18" viewBox="0 0 18 18"><path d="M0.6,2.9 L7.4,1.9 V8.4 H0.6Z M8.4,1.75 L17.2,0.5 V8.4 H8.4Z M0.6,9.4 H7.4 V15.9 L0.6,14.9Z M8.4,9.4 H17.2 V17.3 L8.4,16.05Z" fill="#fff"/></svg>
<div class="a" style="left:48px;top:712px;width:320px;height:40px;background:#f2f2f2;border-top:1px solid #c9c9c9"></div>
<svg style="left:58px;top:721px" width="20" height="20" viewBox="58 721 20 20"><circle cx="70.4" cy="728.4" r="5.1" fill="none" stroke="#1a1a1a" stroke-width="1.4"/><path d="M66.8,732.2 L60.2,738.8" stroke="#1a1a1a" stroke-width="1.5"/></svg>
<div class="t" style="left:88.4px;top:725.0px;font-size:15px;color:#2b2b2b;letter-spacing:0.031px;line-height:20px;height:20px;margin-top:-2px;">Чтобы начать поиск,</div>
<svg style="left:286px;top:713px" width="82" height="39" viewBox="286 713 82 39"><defs><linearGradient id="cl" x1="0" y1="0" x2="0" y2="1"><stop offset="0" stop-color="#f4b49c"/><stop offset="1" stop-color="#e6a6cc"/></linearGradient><linearGradient id="rf" x1="0" y1="0" x2="0" y2="1"><stop offset="0" stop-color="#e88a48"/><stop offset="1" stop-color="#cc6426"/></linearGradient><linearGradient id="wa" x1="0" y1="0" x2="0" y2="1"><stop offset="0" stop-color="#f0d49c"/><stop offset="1" stop-color="#d8b078"/></linearGradient><clipPath id="ic"><rect x="286" y="713" width="82" height="39"/></clipPath></defs><g clip-path="url(#ic)"><path d="M298.4,724.8 Q299,722 302.4,721.6 Q304.4,718.6 307.8,720.4 Q311.4,720 312.4,722.8 Q315,723 315,724.8Z" fill="url(#cl)"/><path d="M337.4,721.4 Q337.8,718.8 340.8,718.6 Q342.6,715 346.4,716.4 Q349.4,716 350,719 Q351.4,719.6 351,721.4Z" fill="url(#cl)"/><path d="M286,752 L300,747 H356 L368,752Z" fill="#8e7c8c"/><rect x="308" y="738.6" width="39" height="9.6" fill="url(#wa)"/><path d="M308.6,738.8 L311,734 H344.6 L346.6,738.8Z" fill="url(#rf)"/><path d="M288,730.6 L292.4,729.8 V752 H288Z" fill="#d0a868"/><path d="M292.4,729.8 L309,734.4 V748 L298,752 H292.4Z" fill="url(#wa)"/><path d="M288,726.9 L292.8,725.9 L310.8,733.6 L308.6,734.4 L292.4,730.3 L288,731.1Z" fill="url(#rf)"/><path d="M342.6,733 L363.4,729 V752 H357 L345.6,748Z" fill="url(#wa)"/><path d="M363.4,729 L368,729.4 V752 H363.4Z" fill="#d8b070"/><path d="M341.4,732.2 L363.2,725.4 L368,725.8 V729.8 L363.4,729.4 L343,733.4Z" fill="url(#rf)"/><rect x="320.2" y="719" width="9.8" height="29.6" fill="#ecd4a4"/><rect x="320.2" y="719" width="9.8" height="1.2" fill="#d8ba88"/><path d="M320.8,719 Q321.4,716.4 324,715.6 L324.8,714 L325.6,715.6 Q328.6,716.4 329.4,719Z" fill="#6c6c92"/><path d="M323.2,728.6 V726.4 Q325.1,723.4 327,726.4 V728.6Z" fill="#7a7aa8"/><rect x="323.2" y="727.6" width="3.8" height="1.4" fill="#f4f0ea"/><circle cx="325.1" cy="735" r="2.2" fill="none" stroke="#d8be90" stroke-width=".7"/><circle cx="325.1" cy="741.6" r="1.3" fill="#f4ecd8"/><path d="M295.6,732 h1.8 v3.2 h-1.8z M300.8,733 h1.7 v3 h-1.7z M305.6,734.2 h1.4 v2.8 h-1.4z M295.6,737.8 h1.8 v3.2 h-1.8z M300.8,738.2 h1.7 v3 h-1.7z M305.6,738.6 h1.4 v2.8 h-1.4z M311,741 h1.6 v2.8 h-1.6z" fill="#6a68b2"/><path d="M344,733.4 h1.4 v2.4 h-1.4z M348.6,733 h1.5 v2.8 h-1.5z M354,732 h1.7 v3 h-1.7z M359,731.2 h1.8 v3.2 h-1.8z M348.6,738.2 h1.5 v2.8 h-1.5z M354,737.8 h1.7 v3 h-1.7z M359,737.4 h1.8 v3.2 h-1.8z" fill="#6a68b2"/><path d="M295.2,752 V745.6 Q297.4,742.4 299.8,745.2 V750.4Z M303,748.6 V744.6 Q304.4,742.4 305.8,744.4 V747.6Z M348,746.6 V743.6 Q349.4,741.8 350.8,743.6 V747.4Z M355,749.2 V744.8 Q357,742.2 359,744.8 V750.8Z" fill="#a8682e"/><path d="M314.4,747.6 V743 Q316.2,740.4 318,743 V747.6Z M332.4,747.6 V743 Q333.6,741 334.8,743 V747.6Z M338.6,747.6 V743 Q340.2,740.6 341.8,743 V747.6Z" fill="#b08848"/><path d="M308.6,748 h2 l-0.4,4 h-1.6z M315,748 h2.4 l0.4,4 h-3z M335,748 h1.8 l0.4,4 h-2z M342.6,748 h2 l0.6,4 h-2.4z" fill="#e8c040" opacity=".8"/></g></svg>
<svg style="left:383px;top:723px" width="19" height="17" viewBox="383 723 19 17"><path d="M384.4,726.8 V724.6 H395.2 V726.8 M384.4,735.6 V737.8 H395.2 V735.6" fill="none" stroke="#fff" stroke-width="1.2"/><rect x="384.9" y="727.9" width="9.8" height="6.6" fill="none" stroke="#fff" stroke-width="1.2"/><path d="M398.8,724 V727.4 M398.8,732.6 V738.4" stroke="#fff" stroke-width="1.4"/><rect x="397.6" y="728.4" width="2.6" height="3" fill="#fff"/></svg>
<svg style="left:430px;top:719.6px" width="26" height="25" viewBox="0 0 26 25"><defs><linearGradient id="e1" x1="0" y1="0" x2="1" y2="0"><stop offset="0" stop-color="#2392dc"/><stop offset=".5" stop-color="#34c0b8"/><stop offset="1" stop-color="#78dc50"/></linearGradient><linearGradient id="e2" x1="0" y1="0" x2="1" y2="1"><stop offset="0" stop-color="#1e86d8"/><stop offset="1" stop-color="#0f4896"/></linearGradient></defs><circle cx="12.9" cy="12.2" r="12.1" fill="url(#e2)"/><path d="M0.8,12.6 Q0.8,0.4 12.9,0.1 Q24.6,0.6 25,11.6 Q25,15.4 21.4,16 Q17.4,16 17.4,13.4 Q18.4,10.6 15.6,8.6 Q11.4,6.4 6.4,9 Q2,11.6 1.4,16Z" fill="url(#e1)"/><path d="M9.2,13.2 Q10.6,9.2 15,10 Q17.6,10.8 16.8,13.2 Q16.6,16.4 20.8,16.8 Q23.6,16.6 25,14.6 Q25.2,17.4 23.4,19.6 Q19.4,21.6 15,19.8 Q10.6,17.8 9.2,13.2Z" fill="#1b1d20"/><path d="M8.6,12 Q8,17.6 12,20.8 Q16.4,23.4 21.4,21 Q16,21.6 12.2,18.6 Q9.6,16 10,11.4Z" fill="#1a66bc"/></svg>
<div class="a" style="left:468px;top:712px;width:48px;height:40px;background:#48494c"></div>
<div class="a" style="left:468px;top:749.6px;width:48px;height:2.4px;background:#76b9ed"></div>
<svg style="left:481px;top:722.6px" width="22" height="19" viewBox="0 0 22 19"><path d="M0,1 Q0,0.2 0.8,0.2 H8.4 L9.8,1.8 H0Z" fill="#eda400"/><path d="M0,1.6 H21.2 Q22,1.6 22,2.4 V17 H0Z" fill="#ffd75e"/><path d="M0,8 H22 V17 H0Z" fill="#fbc94a"/><path d="M4.8,17.6 V10.4 Q4.8,9.4 5.8,9.4 H16.2 Q17.2,9.4 17.2,10.4 V17.6 H14 V13.4 H8 V17.6Z" fill="#3a96dd"/><rect x="8" y="13.4" width="6" height="1.4" fill="#2a78c0"/></svg>
<svg style="left:528.6px;top:719.6px" width="24" height="24" viewBox="0 0 24 24"><path d="M8,6 V4.6 Q8,0.9 11.9,0.9 Q15.8,0.9 15.8,4.6 V6" fill="none" stroke="#fff" stroke-width="1.3"/><path d="M0.4,5.6 H23.6 V20.4 Q23.6,22.6 21.4,22.6 H2.6 Q0.4,22.6 0.4,20.4Z" fill="#fff"/><rect x="6.6" y="8.6" width="4.8" height="4.8" fill="#f25022"/><rect x="12.4" y="8.6" width="4.8" height="4.8" fill="#7fba00"/><rect x="6.6" y="14.4" width="4.8" height="4.8" fill="#00a4ef"/><rect x="12.4" y="14.4" width="4.8" height="4.8" fill="#ffb900"/></svg>
<svg style="left:577.6px;top:720px" width="25" height="24" viewBox="0 0 25 24"><path d="M6,4.6 L14.4,0.4 L24.4,5.4 V19 Q24.4,22.6 20.8,22.6 H8 Q6,22.6 6,20.6Z" fill="#1a9ae8"/><path d="M14.4,0.4 L24.4,5.4 V10 L14.4,14.4Z" fill="#1466c0"/><path d="M6,12 L24.4,19 Q24.4,22.6 20.8,22.6 H8 Q6,22.6 6,20.6Z" fill="#34c2f0"/><path d="M14.4,14.4 L24.4,10 V19Z" fill="#2a86dc"/><rect x="0.4" y="5.2" width="13" height="13" rx="1.4" fill="#0f6cbd"/><ellipse cx="6.9" cy="11.7" rx="3.1" ry="3.5" fill="none" stroke="#fff" stroke-width="1.6"/></svg>
<svg style="left:800px;top:720px" width="100" height="24" viewBox="800 720 100 24"><path d="M805.4,735.2 L811.2,729.4 L817,735.2" fill="none" stroke="#fff" stroke-width="1.3"/><path d="M831,726.2 Q831.6,724.6 835.2,724.5 Q838.8,724.6 839.4,726.2 M831,737.6 Q831.6,739.3 835.2,739.4 Q838.8,739.3 839.4,737.6" fill="none" stroke="#fff" stroke-width="1"/><rect x="830.5" y="729.3" width="6.2" height="5.4" rx="1.2" fill="none" stroke="#fff" stroke-width="1.1"/><path d="M837.2,731 L840.3,729.6 V734.4 L837.2,733" fill="none" stroke="#fff" stroke-width="1"/><rect x="854.8" y="726.8" width="11.6" height="8.6" fill="none" stroke="#fff" stroke-width="1.1"/><path d="M860.2,735.4 V738.4 M856,738.6 H863.4" stroke="#fff" stroke-width="1.1"/><rect x="851.5" y="726.5" width="3.8" height="3.8" fill="#1a2634" stroke="#fff" stroke-width="1"/><rect x="853" y="728" width="1" height="1" fill="#fff"/><path d="M853.3,730.3 V738.9" fill="none" stroke="#fff" stroke-width="1"/><path d="M875.2,729.8 H878 L881.8,726 V738.4 L878,734.6 H875.2Z" fill="none" stroke="#fff" stroke-width="1.1"/><path d="M884,729.6 Q885.6,732.2 884,734.8 M886.4,727.8 Q889,732.2 886.4,736.6 M888.8,726 Q892.6,732.2 888.8,738.4" fill="none" stroke="#fff" stroke-width="1.1"/></svg>
<div class="t" style="left:902.2px;top:724.2px;font-size:12px;color:#fff;letter-spacing:-1.316px;">РУС</div>
<div class="t" style="left:950.4px;top:715.2px;font-size:12px;color:#fff;letter-spacing:-0.908px;">13:43</div>
<div class="t" style="left:937.4px;top:732.6px;font-size:12px;color:#fff;letter-spacing:-0.718px;">09.06.2025</div>
<svg style="left:1006px;top:722px" width="30" height="28" viewBox="1006 722 30 28"><path d="M1009,724.6 H1025.4 V736.6 H1015.4 L1012.6,739.6 V736.6 H1009Z" fill="#fff"/><path d="M1011.4,727.6 H1023 M1011.4,730.4 H1023 M1011.4,733.2 H1020" stroke="#1a2634" stroke-width="1.1"/><circle cx="1024.4" cy="739.2" r="7.6" fill="#2a2f36" stroke="#8a8f96" stroke-width="1"/></svg>
<div class="t" style="left:1021.6px;top:731.4px;font-size:11px;color:#fff;font-weight:700;">1</div>
<div class="a" style="left:1045px;top:712px;width:1px;height:40px;background:#5a636c"></div>
</body></html>
